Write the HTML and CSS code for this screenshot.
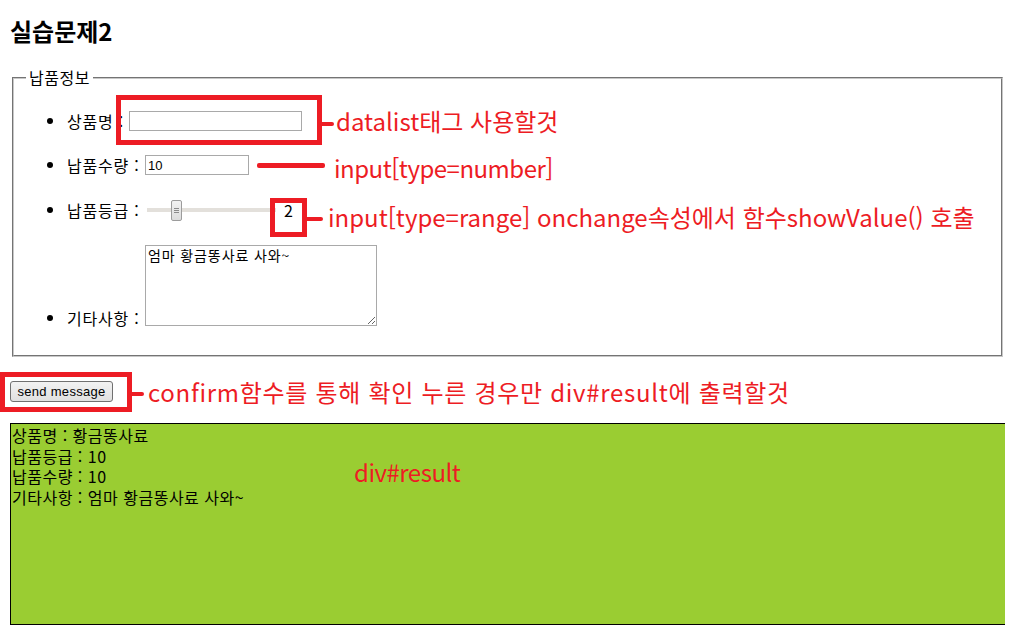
FILE: index.html
```html
<!DOCTYPE html>
<html lang="ko">
<head>
<meta charset="utf-8">
<title>실습문제2</title>
<link rel="stylesheet" href="styles.css">
</head>
<body>
<h2 class="title">실습문제2</h2>
<form class="order-form">
  <fieldset class="info">
    <legend class="info-legend">납품정보</legend>
    <ul class="fields">
      <li class="row row-name"><span class="label">상품명 : </span><input class="text-input name-input" type="text" list="goods"><datalist id="goods"><option value="황금똥사료"></option></datalist></li>
      <li class="row row-qty"><span class="label">납품수량 : </span><input class="text-input qty-input" type="text" value="10"></li>
      <li class="row row-grade"><span class="label">납품등급 : </span><input class="range" type="range" min="0" max="10" value="2"><span class="range-value">2</span></li>
      <li class="row row-etc"><span class="label label-bottom">기타사항 : </span><textarea class="memo">엄마 황금똥사료 사와~</textarea></li>
    </ul>
  </fieldset>
  <button class="send" type="button">send message</button>
</form>
<div class="result" id="result">
  <div class="result-line">상품명 : 황금똥사료</div>
  <div class="result-line">납품등급 : 10</div>
  <div class="result-line">납품수량 : 10</div>
  <div class="result-line">기타사항 : 엄마 황금똥사료 사와~</div>
</div>

<div class="annotations">
  <div class="box box-name"></div>
  <div class="stroke stroke-name"></div>
  <div class="note note-name">datalist태그 사용할것</div>

  <div class="stroke stroke-qty"></div>
  <div class="note note-qty">input[type=number]</div>

  <div class="box box-grade"></div>
  <div class="stroke stroke-grade"></div>
  <div class="note note-grade">input[type=range] onchange속성에서 함수showValue() 호출</div>

  <div class="box box-send"></div>
  <div class="stroke stroke-send"></div>
  <div class="note note-send">confirm함수를 통해 확인 누른 경우만 div#result에 출력할것</div>

  <div class="note note-result">div#result</div>
</div>
</body>
</html>
```
FILE: styles.css
```css
html, body {
  margin: 0;
  padding: 0;
}
body {
  margin: 0 9px 0 10px;
  font-family: "Noto Sans CJK KR", "Noto Sans", sans-serif;
  font-size: 16px;
  color: #000;
  background: #fff;
}
.title {
  margin: 15px 0 20px;
  font-size: 24px;
  line-height: 32px;
  font-weight: 700;
}
.order-form {
  margin: 0;
}
.info {
  margin: 0 2px;
  padding: 0 12px;
  border: 2px groove #c8c8c8;
  height: 290px;
  box-sizing: border-box;
}
.info-legend {
  padding: 0 3px;
  font-size: 16px;
  line-height: 21px;
  letter-spacing: 0.5px;
}
.fields {
  list-style: none;
  margin: 21px 0 0;
  padding: 0 0 0 40px;
}
.row {
  display: flex;
  align-items: center;
  height: 24px;
}
.row::before {
  content: "";
  width: 6px;
  height: 6px;
  border-radius: 50%;
  background: #000;
  margin-left: -19px;
  margin-right: 14px;
  flex: none;
}
.row-qty { margin-top: 20px; }
.row-grade { margin-top: 21px; }
.row-etc {
  margin-top: 23px;
  height: 81px;
  align-items: flex-end;
}
.row-etc::before {
  margin-bottom: 5px;
}
.label {
  white-space: pre;
  line-height: 21px;
  letter-spacing: 0.8px;
}
.label-bottom {
  line-height: 16px;
}
.text-input {
  box-sizing: border-box;
  height: 20px;
  margin: 0;
  padding: 1px 2px;
  border: 1px solid #a9a9a9;
  font-family: "Liberation Sans", Arial, sans-serif;
  font-size: 13px;
  background: #fff;
}
.name-input { width: 173px; }
.qty-input { width: 104px; }
.range {
  -webkit-appearance: none;
  appearance: none;
  width: 129px;
  height: 21px;
  margin: 0 2px;
  background: transparent;
}
.range::-webkit-slider-runnable-track {
  height: 4px;
  background: #e3e0db;
}
.range::-webkit-slider-thumb {
  -webkit-appearance: none;
  width: 11px;
  height: 21px;
  margin-top: -8.5px;
  box-sizing: border-box;
  border: 1px solid #9c9c9c;
  border-radius: 2px;
  background:
    linear-gradient(#8a8a8a, #8a8a8a) no-repeat 2px 7px / 5px 1px,
    linear-gradient(#8a8a8a, #8a8a8a) no-repeat 2px 9px / 5px 1px,
    linear-gradient(#8a8a8a, #8a8a8a) no-repeat 2px 11px / 5px 1px,
    linear-gradient(#f2f2f2, #dcdcdc);
}
.range-value {
  margin-left: 6px;
  line-height: 21px;
}
.memo {
  box-sizing: border-box;
  width: 232px;
  height: 81px;
  margin: 0;
  padding: 1px 2px;
  border: 1px solid #a9a9a9;
  font-family: "Noto Sans CJK KR", sans-serif;
  font-size: 14px;
  line-height: 16px;
  letter-spacing: 0.9px;
  resize: both;
}
.send {
  display: block;
  margin: 24px 0 0;
  box-sizing: border-box;
  width: 103px;
  height: 21px;
  padding: 0;
  border: 1px solid #707070;
  border-radius: 3px;
  background: linear-gradient(#f2f2f2, #e0e0e0);
  font-family: "Liberation Sans", Arial, sans-serif;
  font-size: 13px;
  letter-spacing: 0.3px;
  color: #000;
}
.result {
  box-sizing: border-box;
  margin-top: 21px;
  width: 997px;
  height: 202px;
  padding: 1px 1px;
  border: 1px solid #000;
  background: #9acd32;
  font-size: 16px;
  line-height: 20.5px;
  letter-spacing: 0.5px;
}
.result-line {
  white-space: nowrap;
}

/* red annotation layer drawn over the page */
.annotations {
  position: absolute;
  top: 0;
  left: 0;
  width: 1014px;
  height: 636px;
  pointer-events: none;
}
.box {
  position: absolute;
  box-sizing: border-box;
  border: 5px solid #ed1c24;
}
.box-name { left: 116px; top: 95px; width: 206px; height: 50px; }
.box-grade { left: 270px; top: 198px; width: 37px; height: 39px; }
.box-send { left: 0; top: 372px; width: 132px; height: 40px; }
.stroke {
  position: absolute;
  height: 4px;
  background: #ed1c24;
  border-radius: 2px;
}
.stroke-name { left: 320px; top: 122px; width: 14px; }
.stroke-qty { left: 257px; top: 163px; width: 68px; height: 5px; }
.stroke-grade { left: 305px; top: 217px; width: 18px; }
.stroke-send { left: 130px; top: 392px; width: 14px; }
.note {
  position: absolute;
  color: #ed1c24;
  font-family: "Noto Sans CJK KR", sans-serif;
  font-size: 24px;
  line-height: 24px;
  white-space: nowrap;
}
.note-name { left: 336px; top: 109px; }
.note-qty { left: 334px; top: 156px; letter-spacing: -0.5px; }
.note-grade { left: 328px; top: 205px; }
.note-send { left: 148px; top: 380px; letter-spacing: 0.7px; }
.note-result { left: 354px; top: 460px; letter-spacing: -0.5px; }
```
